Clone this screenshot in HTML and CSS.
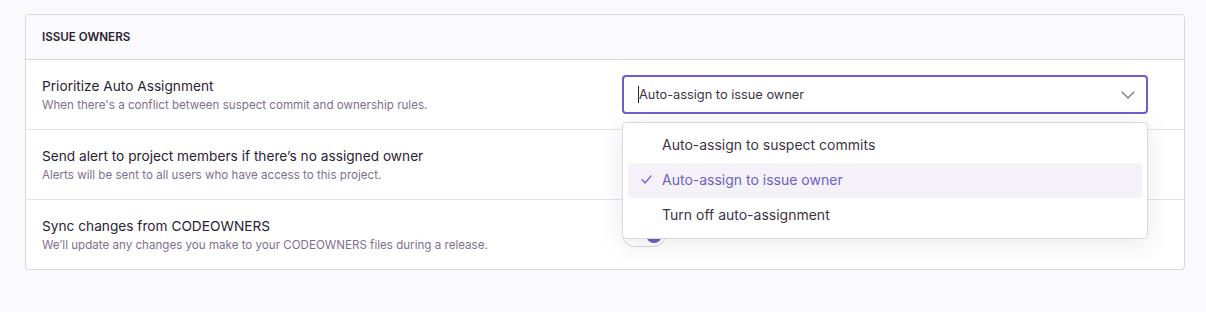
FILE: index.html
```html
<!DOCTYPE html>
<html>
<head>
    <title>Issue Owners</title>
    <link rel="stylesheet" href="styles.css">
</head>
<body>
    <div class="panel">
        <div class="panel-header">Issue Owners</div>

        <div class="field">
            <div class="field-label">
                <h4>Prioritize Auto Assignment</h4>
                <p>When there's a conflict between suspect commit and ownership rules.</p>
            </div>
            <div class="field-control">
                <div class="select">
                    <span class="select-value"><span class="caret"></span>Auto-assign to issue owner</span>
                    <svg class="chevron" width="14" height="8" viewBox="0 0 14 8">
                        <path d="M1 1 L7 7 L13 1" fill="none" stroke="#80708f" stroke-width="1.3" stroke-linecap="round" stroke-linejoin="round"/>
                    </svg>
                </div>
                <div class="menu">
                    <div class="menu-item">Auto-assign to suspect commits</div>
                    <div class="menu-item selected">
                        <svg class="check" width="11" height="9" viewBox="0 0 11 9">
                            <path d="M1 4.5 L4 8 L10 1" fill="none" stroke="#6c5fc7" stroke-width="1.2" stroke-linecap="round" stroke-linejoin="round"/>
                        </svg>
                        Auto-assign to issue owner
                    </div>
                    <div class="menu-item">Turn off auto-assignment</div>
                </div>
            </div>
        </div>

        <div class="field">
            <div class="field-label">
                <h4>Send alert to project members if there’s no assigned owner</h4>
                <p>Alerts will be sent to all users who have access to this project.</p>
            </div>
            <div class="field-control"></div>
        </div>

        <div class="field">
            <div class="field-label">
                <h4>Sync changes from CODEOWNERS</h4>
                <p>We’ll update any changes you make to your CODEOWNERS files during a release.</p>
            </div>
            <div class="field-control">
                <div class="switch"><span class="knob"></span></div>
            </div>
        </div>
    </div>
</body>
</html>
```

FILE: styles.css
```css
* {
    margin: 0;
    padding: 0;
    box-sizing: border-box;
    font-family: 'Inter', sans-serif;
}

body {
    background: #faf9fb;
    padding: 14px 21px 0 25px;
    color: #2b2233;
}

.panel {
    background: white;
    border: 1px solid #dbd6e1;
    border-radius: 4px;
    box-shadow: 0 1px 1px rgba(0,0,0,0.04);
}

.panel-header {
    background: #faf9fb;
    border-bottom: 1px solid #dbd6e1;
    border-radius: 4px 4px 0 0;
    height: 45px;
    padding: 0 16px;
    display: flex;
    align-items: center;
    font-size: 11.6px;
    font-weight: 600;
    text-transform: uppercase;
    color: #2b2233;
}

.field {
    display: grid;
    grid-template-columns: 1fr 526px;
    gap: 16px;
    align-items: center;
    height: 70px;
    padding: 0 36px 0 16px;
    border-bottom: 1px solid #e7e1ec;
}

.field:last-child {
    border-bottom: none;
    height: 69px;
}

.field-label h4 {
    font-size: 13.7px;
    font-weight: 400;
    color: #2b2233;
    margin-bottom: 4px;
}

.field-label p {
    font-size: 11.6px;
    color: #80708f;
}

.field-control {
    position: relative;
    height: 39px;
    display: flex;
    align-items: center;
}

.select {
    width: 100%;
    height: 39px;
    border: 2px solid #6c5fc7;
    border-radius: 4px;
    background: white;
    display: flex;
    align-items: center;
    justify-content: space-between;
    padding: 0 11px 0 14px;
    font-size: 12.8px;
    color: #3e3446;
}

.caret {
    display: inline-block;
    width: 1px;
    height: 17px;
    background: #2b2233;
    vertical-align: -4px;
}

.menu {
    position: absolute;
    top: 47px;
    left: 0;
    width: 526px;
    background: white;
    border: 1px solid #dbd6e1;
    border-radius: 4px;
    box-shadow: 0 4px 24px rgba(43,34,51,0.1);
    padding: 5px 5px 5px;
    z-index: 2;
}

.menu-item {
    height: 35px;
    padding-left: 34px;
    padding-bottom: 3px;
    display: flex;
    align-items: center;
    font-size: 14px;
    color: #3e3446;
    border-radius: 4px;
    position: relative;
}

.menu-item.selected {
    background: #f4f2f8;
    color: #6c5fc7;
}

.check {
    position: absolute;
    left: 13px;
    top: 12px;
}

.switch {
    width: 44px;
    height: 24px;
    border: 1px solid #dbd6e1;
    border-radius: 12px;
    background: white;
    position: relative;
}

.knob {
    position: absolute;
    right: 3px;
    top: 3px;
    width: 16px;
    height: 16px;
    border-radius: 50%;
    background: #6c5fc7;
}
```
